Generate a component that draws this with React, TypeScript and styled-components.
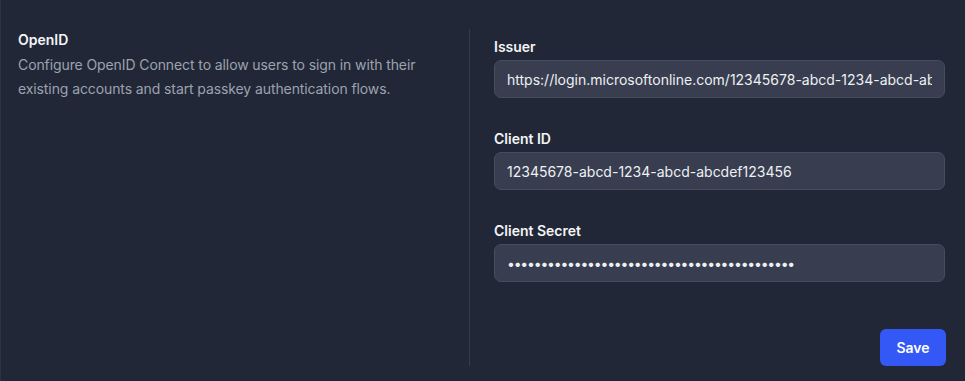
import React from "react"
import styled, { createGlobalStyle } from "styled-components"

const GlobalStyle = createGlobalStyle`
  html, body {
    margin: 0;
    padding: 0;
    background: #212736;
  }
  body {
    font-family: 'Inter', 'Noto Sans', sans-serif;
    -webkit-font-smoothing: antialiased;
  }
`

const Panel = styled.div`
  width: 965px;
  height: 381px;
  box-sizing: border-box;
  background: #212736;
  border-left: 1px solid #2c3242;
  display: flex;
  padding: 29px 19px 15px 17px;
`

const Intro = styled.section`
  width: 427px;
  padding-right: 24px;
  padding-top: 1px;
`

const Title = styled.h3`
  margin: 0 0 3px 0;
  font-size: 14px;
  line-height: 20px;
  font-weight: 600;
  color: #f3f4f6;
`

const Description = styled.p`
  margin: 0;
  font-size: 14px;
  line-height: 24px;
  font-weight: 400;
  color: #9ca3af;
  letter-spacing: -0.1px;
`

const Form = styled.form`
  flex: 1;
  border-left: 1px solid #363c4c;
  padding: 8px 0 0 24px;
  display: flex;
  flex-direction: column;
  gap: 31px;
`

const Field = styled.div`
  display: flex;
  flex-direction: column;
  gap: 3px;
`

const Label = styled.label`
  font-size: 14px;
  line-height: 20px;
  font-weight: 600;
  color: #f3f4f6;
`

const Input = styled.input<{ $masked?: boolean }>`
  box-sizing: border-box;
  width: 451px;
  height: 38px;
  padding: 0 12px;
  border: 1px solid #474d5e;
  border-radius: 7px;
  background: #383e4f;
  color: #eef0f3;
  font-family: 'Inter', 'Noto Sans', sans-serif;
  font-size: 14px;
  letter-spacing: ${(p) => (p.$masked ? "-1.2px" : "normal")};
  outline: none;
`

const Actions = styled.div`
  margin-top: auto;
  display: flex;
  justify-content: flex-end;
`

const SaveButton = styled.button`
  width: 66px;
  height: 37px;
  padding: 0;
  border: none;
  border-radius: 6px;
  background: #3358f5;
  color: #ffffff;
  font-family: 'Inter', 'Noto Sans', sans-serif;
  font-size: 14px;
  font-weight: 600;
  cursor: pointer;
`

const fields = [
  { id: "issuer", label: "Issuer", type: "text", value: "https://login.microsoftonline.com/12345678-abcd-1234-abcd-abcdef123456/v2.0" },
  { id: "client-id", label: "Client ID", type: "text", value: "12345678-abcd-1234-abcd-abcdef123456" },
  { id: "client-secret", label: "Client Secret", type: "password", value: "x".repeat(43) },
]

export default function App() {
  return (
    <>
      <GlobalStyle />
      <Panel>
        <Intro>
          <Title>OpenID</Title>
          <Description>
            Configure OpenID Connect to allow users to sign in with their existing accounts and start passkey
            authentication flows.
          </Description>
        </Intro>
        <Form onSubmit={(e) => e.preventDefault()}>
          {fields.map((f) => (
            <Field key={f.id}>
              <Label htmlFor={f.id}>{f.label}</Label>
              <Input id={f.id} type={f.type} $masked={f.type === "password"} defaultValue={f.value} />
            </Field>
          ))}
          <Actions>
            <SaveButton type="submit">Save</SaveButton>
          </Actions>
        </Form>
      </Panel>
    </>
  )
}
